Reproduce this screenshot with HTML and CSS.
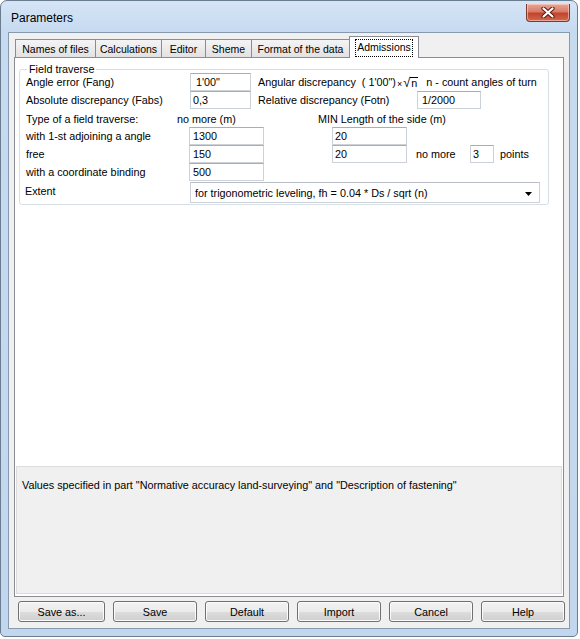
FILE: index.html
```html
<!DOCTYPE html>
<html>
<head>
<meta charset="utf-8">
<title>Parameters</title>
<link rel="stylesheet" href="styles.css">
</head>
<body>
<div class="window">
  <div class="titlebar">
    <span class="title">Parameters</span>
    <div class="close">
      <svg width="14" height="11" viewBox="0 0 14 11">
        <path d="M2.5 1.5 L11.5 9.5 M11.5 1.5 L2.5 9.5" stroke="#5a1a12" stroke-width="4.2" stroke-linecap="round"/>
        <path d="M2.5 1.5 L11.5 9.5 M11.5 1.5 L2.5 9.5" stroke="#ffffff" stroke-width="2.2" stroke-linecap="round"/>
      </svg>
    </div>
  </div>
  <div class="client">
    <div class="tabs">
      <div class="tab tw1">Names of files</div>
      <div class="tab tw2">Calculations</div>
      <div class="tab tw3">Editor</div>
      <div class="tab tw4">Sheme</div>
      <div class="tab tw5">Format of the data</div>
      <div class="tab sel"><span class="focus">Admissions</span></div>
    </div>
    <div class="panel">
      <div class="group">
        <div class="legend">Field traverse</div>
        <div class="row">
          <span class="lab w164">Angle error (Fang)</span>
          <span class="tb w61 p5">1'00"</span>
          <span class="ml7">Angular discrepancy</span>
          <span class="f1">( 1'00")</span><span class="times">×</span><span class="sqrt">√</span><span class="ov">n</span>
          <span class="f2">n - count angles of turn</span>
        </div>
        <div class="row">
          <span class="lab w164">Absolute discrepancy (Fabs)</span>
          <span class="tb w61 p2">0,3</span>
          <span class="ml7 w159">Relative discrepancy (Fotn)</span>
          <span class="tb w64 p4">1/2000</span>
        </div>
        <div class="row r3">
          <span class="lab w151">Type of a field traverse:</span>
          <span class="w141">no more (m)</span>
          <span>MIN Length of the side (m)</span>
        </div>
        <div class="row">
          <span class="lab w163">with 1-st adjoining a angle</span>
          <span class="tb w75 p3">1300</span>
          <span class="tb w75 p2 ml68">20</span>
        </div>
        <div class="row">
          <span class="lab w163">free</span>
          <span class="tb w75 p3">150</span>
          <span class="tb w75 p2 ml68">20</span>
          <span class="ml9 w54">no more</span>
          <span class="tb w24 p2">3</span>
          <span class="ml6">points</span>
        </div>
        <div class="row">
          <span class="lab w163">with a coordinate binding</span>
          <span class="tb w75 p3">500</span>
        </div>
        <div class="row r7">
          <span class="lab w164 extent">Extent</span>
          <div class="combo">
            <span>for trigonometric leveling, fh = 0.04 * Ds / sqrt (n)</span>
            <svg class="arrow" width="7" height="4" viewBox="0 0 7 4"><path d="M0 0 H7 L3.5 4 Z" fill="#000"/></svg>
          </div>
        </div>
      </div>
      <div class="fill"></div>
      <div class="memo">Values specified in part "Normative accuracy land-surveying" and "Description of fastening"</div>
    </div>
    <div class="buttons">
      <div class="btn bw1">Save as...</div>
      <div class="btn">Save</div>
      <div class="btn">Default</div>
      <div class="btn">Import</div>
      <div class="btn">Cancel</div>
      <div class="btn">Help</div>
    </div>
  </div>
</div>
</body>
</html>
```
FILE: styles.css
```css
* { box-sizing: border-box; }
html, body { margin: 0; padding: 0; background: #ffffff; }
body {
  font-family: "Liberation Sans", Arial, sans-serif;
  font-size: 10.8px;
  color: #000;
}
.window {
  width: 578px;
  height: 637px;
  border: 1px solid #6a7c90;
  border-radius: 7px 7px 5px 5px;
  background: linear-gradient(to bottom, #d6e5f6 0px, #c6daf0 30px, #c2d6ed 100%);
  display: flex;
  flex-direction: column;
}
.titlebar {
  height: 31px;
  flex: none;
  display: flex;
  justify-content: space-between;
  align-items: flex-start;
  padding: 0 7px 0 10px;
}
.title {
  font-size: 12px;
  line-height: 14px;
  margin-top: 10px;
}
.close {
  margin-top: 3px;
  width: 44px;
  height: 18px;
  border: 1px solid #7a3a30;
  border-top: none;
  border-radius: 0 0 4px 4px;
  background: linear-gradient(to bottom, #e8a595 0%, #d97c69 45%, #c2432c 55%, #d06a52 100%);
  box-shadow: inset 0 0 0 1px rgba(255,220,210,0.55);
  display: flex;
  align-items: center;
  justify-content: center;
}
.client {
  margin: 0 7px 7px 7px;
  height: 597px;
  border: 1px solid #8799ae;
  background: #f0f0f0;
  display: flex;
  flex-direction: column;
}
.tabs {
  height: 24px;
  flex: none;
  display: flex;
  align-items: flex-end;
  padding-left: 6px;
  font-size: 10.5px;
}
.tab {
  height: 18px;
  border: 1px solid #898c95;
  border-bottom: none;
  margin-right: -1px;
  background: linear-gradient(to bottom, #f4f4f4, #e2e2e2);
  display: flex;
  align-items: center;
  justify-content: center;
  white-space: nowrap;
}
.tw1 { width: 81px; }
.tw2 { width: 67px; }
.tw3 { width: 45px; }
.tw4 { width: 47px; }
.tw5 { width: 99px; }
.tab.sel {
  width: 70px;
  height: 22px;
  margin-bottom: -1px;
  background: #ffffff;
  position: relative;
  z-index: 1;
  align-items: flex-start;
  padding-top: 2px;
}
.focus {
  border: 1px dotted #000;
  padding: 1px 1px 2px 1px;
  line-height: 13px;
}
.panel {
  margin: 0 5px;
  height: 540px;
  flex: none;
  border: 1px solid #898c95;
  background: #ffffff;
  display: flex;
  flex-direction: column;
}
.group {
  margin: 11px 0 0 4px;
  width: 530px;
  border: 1px solid #d5dfe5;
  border-radius: 3px;
  padding: 0 6px 1px 6px;
}
.legend {
  width: max-content;
  margin: -7px 0 -3px 1px;
  padding: 0 2px;
  background: #ffffff;
  line-height: 13px;
}
.row {
  display: flex;
  align-items: center;
  height: 18px;
  white-space: nowrap;
}
.r3 { height: 17px; margin-top: 1px; }
.r7 { height: 21px; margin-top: 1px; }
.lab { flex: none; }
.tb {
  flex: none;
  display: block;
  height: 18px;
  border: 1px solid #cdd1d8;
  border-top-color: #abadb3;
  background: #ffffff;
  line-height: 16px;
}
.w164 { width: 164px; }
.w163 { width: 163px; }
.w151 { width: 151px; }
.w141 { width: 141px; flex: none; }
.w159 { width: 159px; flex: none; }
.w54 { width: 54px; flex: none; }
.w61 { width: 61px; }
.w64 { width: 64px; }
.w75 { width: 75px; }
.w24 { width: 24px; }
.p2 { padding-left: 2px; }
.p3 { padding-left: 3px; }
.p4 { padding-left: 4px; }
.p5 { padding-left: 5px; }
.ml6 { margin-left: 6px; }
.ml7 { margin-left: 7px; }
.ml9 { margin-left: 9px; }
.ml68 { margin-left: 68px; }
.f1 { margin-left: 6px; }
.times { font-size: 9px; margin-top: 4px; margin-left: 1px; }
.sqrt { font-size: 13px; line-height: 13px; margin-left: 1px; }
.ov {
  border-top: 1px solid #000;
  line-height: 11px;
  margin-top: 1px;
  padding: 0 1px;
}
.f2 { margin-left: 8px; }
.extent { margin-left: -1px; margin-right: 1px; margin-top: -3px; }
.combo {
  width: 350px;
  height: 21px;
  border: 1px solid #cdd1d8;
  border-top-color: #b8bcc4;
  background: #ffffff;
  display: flex;
  align-items: center;
  justify-content: space-between;
  padding: 1px 7px 0 4px;
}
.arrow { display: block; margin-top: 1px; }
.fill { flex: 1; }
.memo {
  margin: 0 1px 2px 1px;
  height: 128px;
  flex: none;
  background: #f0f0f0;
  border: 1px solid #dcdcdc;
  padding: 12px 0 0 5px;
  line-height: 13px;
}
.buttons {
  display: flex;
  gap: 8px;
  margin-top: 4px;
  padding-left: 9px;
}
.btn {
  width: 84px;
  height: 21px;
  border: 1px solid #707070;
  border-radius: 3px;
  background: linear-gradient(to bottom, #f2f2f2 0%, #ebebeb 50%, #dddddd 50%, #cfcfcf 100%);
  box-shadow: inset 0 0 0 1px #fbfbfb;
  display: flex;
  align-items: center;
  justify-content: center;
}
.bw1 { width: 87px; }
```
